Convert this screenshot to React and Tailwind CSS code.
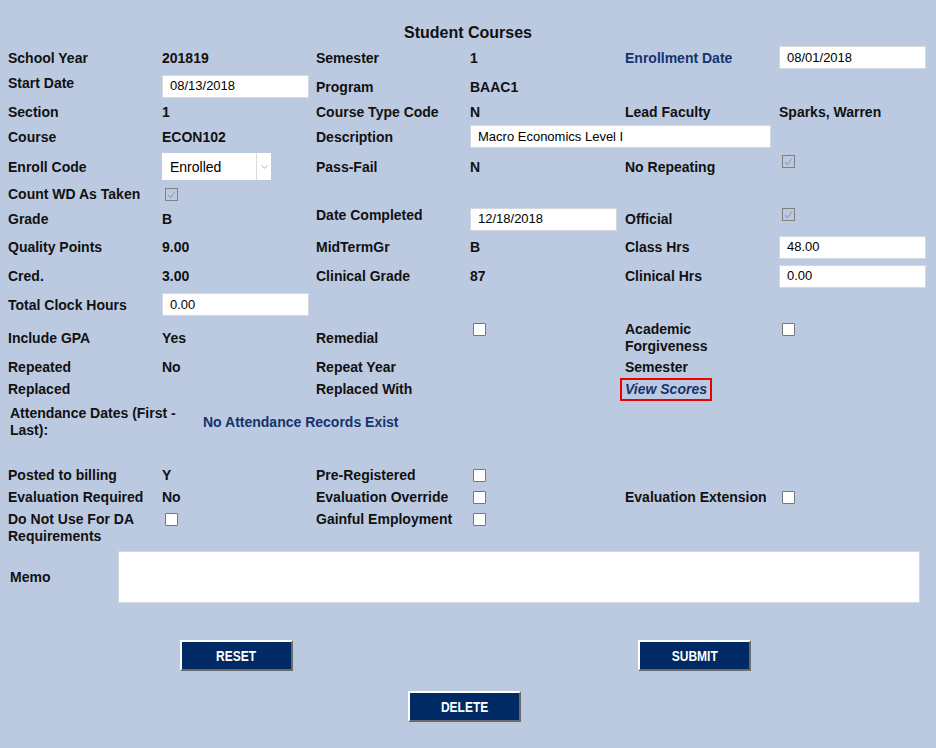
import React from 'react';

const font = { fontFamily: '"Liberation Sans", Arial, sans-serif' };

function Box({ checked }) {
  if (checked) {
    return (
      <span className="inline-flex w-[13px] h-[13px] ml-[3px] border border-[#808080] items-center justify-center">
        <svg width="9" height="9" viewBox="0 0 9 9">
          <path d="M1 5 L3.5 7.5 L8 1.5" fill="none" stroke="#9aa4b4" strokeWidth="1.2" />
        </svg>
      </span>
    );
  }
  return <span className="inline-block w-[13px] h-[13px] ml-[3px] border border-[#767676] bg-white rounded-[1px]" />;
}

function Field({ value, w = 'w-[147px]' }) {
  return (
    <div className={`${w} h-[23px] bg-white border border-[#d4d8de] flex items-center pl-[7px] text-[13px] text-black font-normal`}>
      {value}
    </div>
  );
}

// 6 columns lined up at x = 8, 162, 316, 470, 625, 779
const cols = 'grid grid-cols-[154px_154px_154px_155px_154px_147px]';

export default function App() {
  return (
    <div className="w-[936px] h-[748px] bg-[#bccae1] text-[14px] font-bold text-[#111] leading-[16px]" style={font}>
      <div className="pt-[24px] text-center text-[16px] leading-[18px]">Student Courses</div>

      <div className="pl-[8px] pt-[2px]">
        <div className={`${cols} h-[27px] items-center`}>
          <div>School Year</div>
          <div>201819</div>
          <div>Semester</div>
          <div>1</div>
          <div className="text-[#15336d]">Enrollment Date</div>
          <Field value="08/01/2018" />
        </div>

        <div className={`${cols} h-[30px] items-center`}>
          <div className="self-start pt-[4px]">Start Date</div>
          <Field value="08/13/2018" />
          <div className="pt-[2px]">Program</div>
          <div className="pt-[2px]">BAAC1</div>
          <div />
          <div />
        </div>

        <div className={`${cols} h-[22px] items-center`}>
          <div>Section</div>
          <div>1</div>
          <div>Course Type Code</div>
          <div>N</div>
          <div>Lead Faculty</div>
          <div>Sparks, Warren</div>
        </div>

        <div className={`${cols} h-[27px] items-center`}>
          <div>Course</div>
          <div>ECON102</div>
          <div>Description</div>
          <div className="col-span-2">
            <Field value="Macro Economics Level I" w="w-[301px]" />
          </div>
          <div />
        </div>

        <div className={`${cols} h-[33px] items-center`}>
          <div>Enroll Code</div>
          <div className="w-[109px] h-[27px] bg-white flex items-center">
            <span className="flex-1 pl-[8px] text-[14px] font-normal text-black">Enrolled</span>
            <span className="w-[15px] h-full border-l border-[#d8dce2] flex items-center justify-center">
              <svg width="7" height="4" viewBox="0 0 7 4">
                <path d="M0.5 0.5 L3.5 3.2 L6.5 0.5" fill="none" stroke="#b0b4ba" strokeWidth="1" />
              </svg>
            </span>
          </div>
          <div>Pass-Fail</div>
          <div>N</div>
          <div>No Repeating</div>
          <div className="self-start mt-[5px] flex">
            <Box checked />
          </div>
        </div>

        <div className={`${cols} h-[22px] items-center`}>
          <div>Count WD As Taken</div>
          <div className="flex">
            <Box checked />
          </div>
          <div />
          <div />
          <div />
          <div />
        </div>

        <div className={`${cols} h-[28px] items-center`}>
          <div>Grade</div>
          <div>B</div>
          <div className="self-start pt-[2px]">Date Completed</div>
          <Field value="12/18/2018" />
          <div>Official</div>
          <div className="self-start mt-[3px] flex">
            <Box checked />
          </div>
        </div>

        <div className={`${cols} h-[28px] items-center`}>
          <div>Quality Points</div>
          <div>9.00</div>
          <div>MidTermGr</div>
          <div>B</div>
          <div>Class Hrs</div>
          <Field value="48.00" />
        </div>

        <div className={`${cols} h-[30px] items-center`}>
          <div>Cred.</div>
          <div>3.00</div>
          <div>Clinical Grade</div>
          <div>87</div>
          <div>Clinical Hrs</div>
          <Field value="0.00" />
        </div>

        <div className={`${cols} h-[27px] items-center`}>
          <div>Total Clock Hours</div>
          <Field value="0.00" />
          <div />
          <div />
          <div />
          <div />
        </div>

        <div className={`${cols} h-[40px] items-center`}>
          <div>Include GPA</div>
          <div>Yes</div>
          <div>Remedial</div>
          <div className="self-start mt-[5px] flex">
            <Box />
          </div>
          <div className="leading-[17px]">
            Academic
            <br />
            Forgiveness
          </div>
          <div className="self-start mt-[5px] flex">
            <Box />
          </div>
        </div>

        <div className={`${cols} h-[18px] items-center`}>
          <div>Repeated</div>
          <div>No</div>
          <div>Repeat Year</div>
          <div />
          <div>Semester</div>
          <div />
        </div>

        <div className={`${cols} h-[26px] items-center`}>
          <div>Replaced</div>
          <div />
          <div>Replaced With</div>
          <div />
          <div>
            <span className="inline-flex items-center h-[23px] -ml-[5px] px-[3px] border-2 border-[#ee0000] italic text-[#15336d]">
              View Scores
            </span>
          </div>
          <div />
        </div>
      </div>

      <div className="flex items-center h-[40px] pl-[10px]">
        <div className="w-[193px] leading-[17px]">
          Attendance Dates (First -
          <br />
          Last):
        </div>
        <div className="text-[#15336d]">No Attendance Records Exist</div>
      </div>

      <div className="pl-[8px] pt-[22px]">
        <div className={`${cols} h-[22px] items-center`}>
          <div>Posted to billing</div>
          <div>Y</div>
          <div>Pre-Registered</div>
          <div className="flex">
            <Box />
          </div>
          <div />
          <div />
        </div>

        <div className={`${cols} h-[22px] items-center`}>
          <div>Evaluation Required</div>
          <div>No</div>
          <div>Evaluation Override</div>
          <div className="flex">
            <Box />
          </div>
          <div>Evaluation Extension</div>
          <div className="flex">
            <Box />
          </div>
        </div>

        <div className={`${cols} h-[36px] items-start pt-[3px] leading-[17px]`}>
          <div>
            Do Not Use For DA
            <br />
            Requirements
          </div>
          <div className="flex pt-[2px]">
            <Box />
          </div>
          <div>Gainful Employment</div>
          <div className="flex pt-[2px]">
            <Box />
          </div>
          <div />
          <div />
        </div>
      </div>

      <div className="flex items-center pl-[10px] pt-[7px]">
        <div className="w-[108px]">Memo</div>
        <div className="w-[802px] h-[52px] bg-white border border-[#d4d8de]" />
      </div>

      <div className="flex pt-[37px] pl-[180px]">
        <Btn label="RESET" />
        <div className="w-[345px]" />
        <Btn label="SUBMIT" />
      </div>
      <div className="flex pt-[20px] pl-[408px]">
        <Btn label="DELETE" />
      </div>
    </div>
  );
}

function Btn({ label }) {
  return (
    <button className="w-[113px] h-[31px] bg-[#002a63] border-2 border-t-white border-l-white border-r-[#6b6b6b] border-b-[#6b6b6b] flex items-center justify-center text-white text-[15px] font-bold">
      <span className="inline-block scale-x-[0.8]">{label}</span>
    </button>
  );
}
